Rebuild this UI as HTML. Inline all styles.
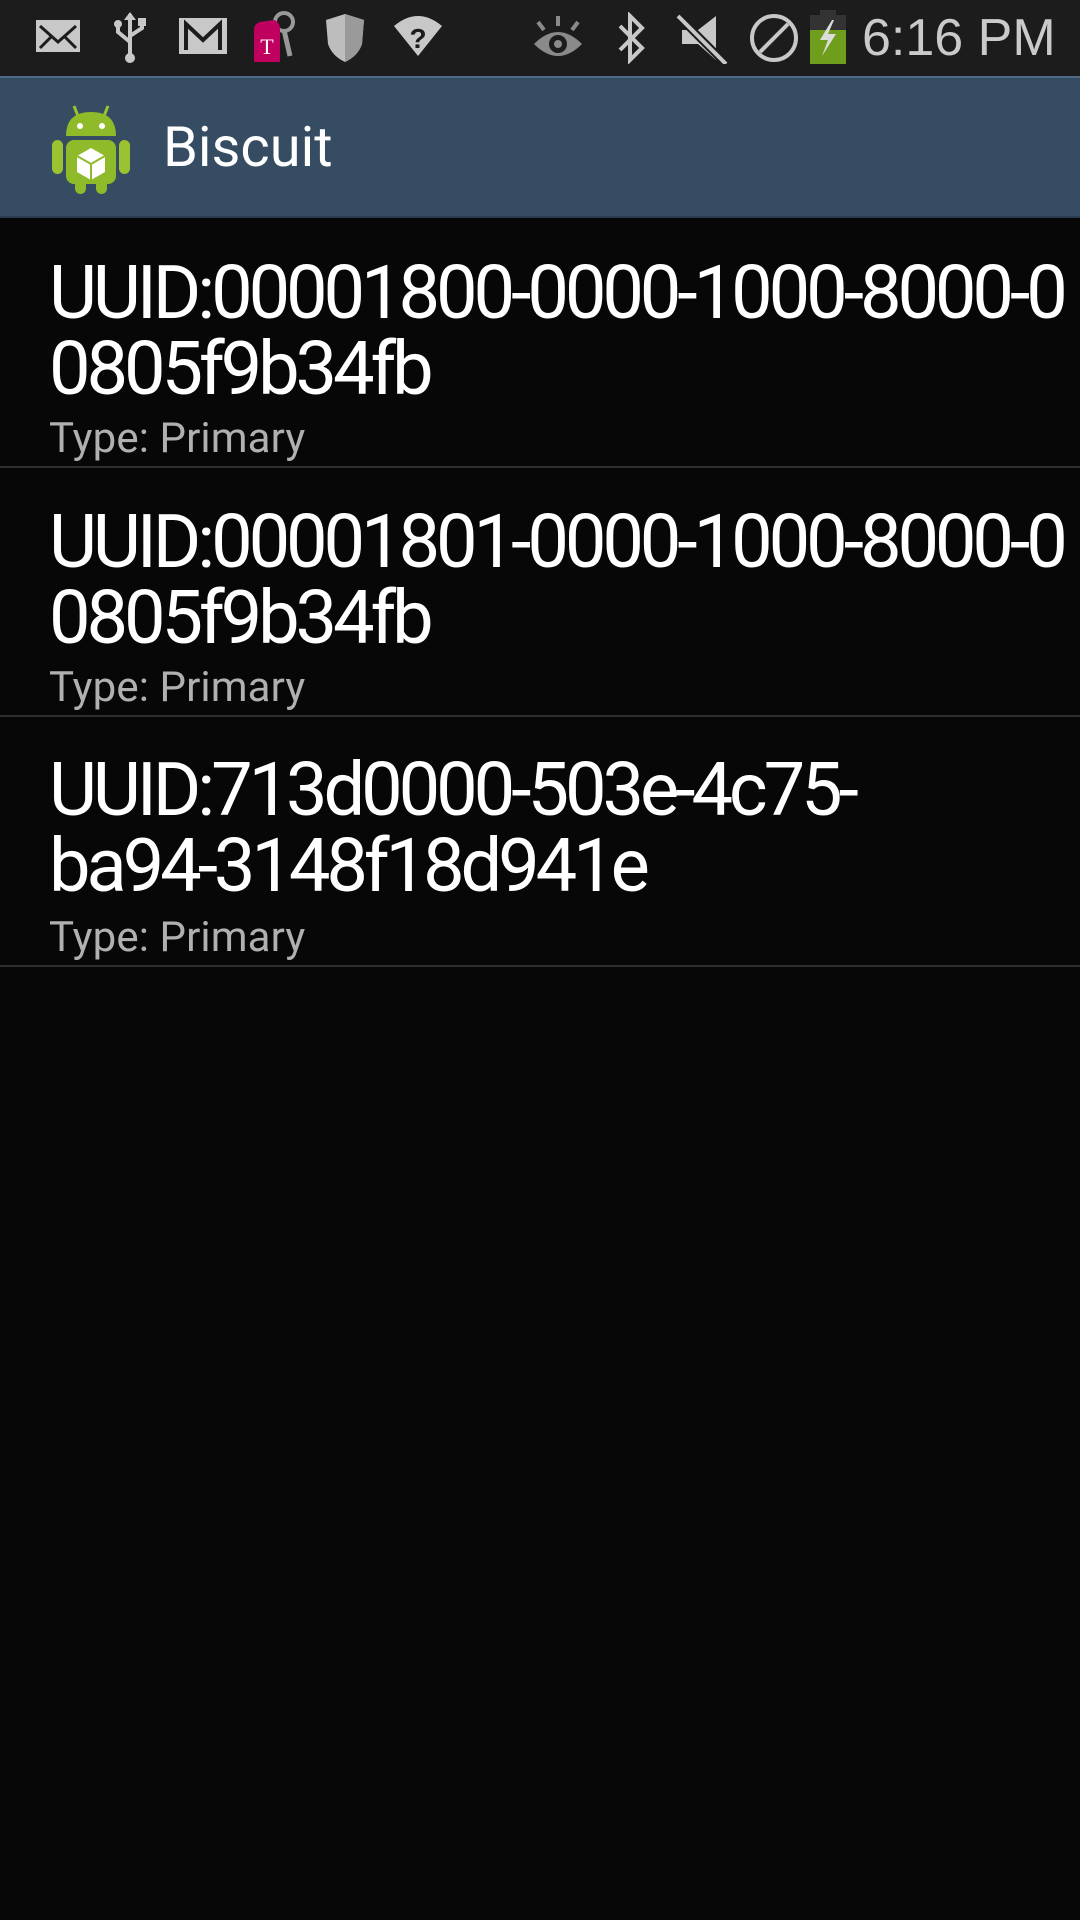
<!DOCTYPE html>
<html><head><meta charset="utf-8"><style>
html,body{margin:0;padding:0;}
body{width:1080px;height:1920px;background:#070707;position:relative;overflow:hidden;font-family:"Roboto","Liberation Sans",sans-serif;}
#sb{position:absolute;left:0;top:0;width:1080px;height:76px;background:#1c1c1c;}
#ab{position:absolute;left:0;top:76px;width:1080px;height:142px;background:#354c63;border-top:2px solid #4e6a86;box-sizing:border-box;border-bottom:2px solid #2a3d50;}
.t{position:absolute;left:49px;color:#fff;font-size:74px;letter-spacing:-4.1px;line-height:76px;white-space:nowrap;}
.s{position:absolute;left:49px;color:#b0b0b0;font-size:42px;letter-spacing:0.1px;white-space:nowrap;line-height:50px;}
.d{position:absolute;left:0;width:1080px;height:2px;background:#2f2f2f;}
svg{position:absolute;}
</style></head><body>
<div id="sb">
<svg style="left:34px;top:16px" width="48" height="40" viewBox="0 0 48 40"><rect x="2" y="4" width="44" height="32" fill="#c8c8c8"/><path d="M6 10 L24 26 L42 10 M6 32 L18 20 M42 32 L30 20" stroke="#1c1c1c" stroke-width="3" fill="none"/></svg>
<svg style="left:112px;top:12px" width="36" height="52" viewBox="0 0 36 52"><path d="M18 2 L18 46 M18 30 L6 20 L6 14 M18 24 L30 16 L30 10" stroke="#c8c8c8" stroke-width="4" fill="none"/><circle cx="18" cy="46" r="5" fill="#c8c8c8"/><circle cx="6" cy="12" r="4" fill="#c8c8c8"/><rect x="26" y="6" width="8" height="8" fill="#c8c8c8"/><path d="M12 8 L18 0 L24 8Z" fill="#c8c8c8"/></svg>
<svg style="left:178px;top:16px" width="50" height="40" viewBox="0 0 50 40"><rect x="1" y="2" width="48" height="36" fill="#c8c8c8"/><path d="M8 34 L8 8 L25 24 L42 8 L42 34" stroke="#1c1c1c" stroke-width="4" fill="none"/></svg>
<svg style="left:250px;top:10px" width="50" height="56" viewBox="0 0 50 56"><circle cx="34" cy="12" r="9" fill="none" stroke="#999" stroke-width="4"/><path d="M34 20 L40 46" stroke="#999" stroke-width="5"/><path d="M4 20 Q4 14 10 12 L24 10 Q30 12 30 20 L30 52 L4 52Z" fill="#c0005e"/><text x="17" y="44" font-size="22" fill="#fff" text-anchor="middle" font-family="Liberation Serif">T</text></svg>
<svg style="left:324px;top:12px" width="42" height="52" viewBox="0 0 42 52"><path d="M21 2 L40 8 L38 32 Q34 44 21 50 Q8 44 4 32 L2 8Z" fill="#bdbdbd"/><path d="M21 2 L40 8 L38 32 Q34 44 21 50Z" fill="#9a9a9a"/></svg>
<svg style="left:392px;top:12px" width="52" height="48" viewBox="0 0 52 48"><path d="M2 14 Q26 -6 50 14 L26 44Z" fill="#c8c8c8"/><text x="26" y="36" font-size="28" font-weight="bold" fill="#1c1c1c" text-anchor="middle" font-family="Liberation Sans">?</text></svg>
<svg style="left:530px;top:14px" width="56" height="48" viewBox="0 0 56 48"><path d="M4 30 Q28 6 52 30 Q28 54 4 30Z" fill="#8a8a8a"/><circle cx="28" cy="30" r="9" fill="#1c1c1c"/><circle cx="28" cy="30" r="4" fill="#8a8a8a"/><path d="M28 2 L28 12 M8 8 L14 16 M48 8 L42 16" stroke="#8a8a8a" stroke-width="4"/></svg>
<svg style="left:614px;top:12px" width="34" height="52" viewBox="0 0 34 52"><path d="M6 14 L28 36 L16 48 L16 4 L28 16 L6 38" stroke="#c8c8c8" stroke-width="4" fill="none"/></svg>
<svg style="left:676px;top:12px" width="54" height="52" viewBox="0 0 54 52"><path d="M40 4 L40 48 L22 32 L6 32 L6 18 L22 18Z" fill="#c8c8c8"/><path d="M2 4 L50 52" stroke="#1c1c1c" stroke-width="8"/><path d="M2 4 L50 52" stroke="#c8c8c8" stroke-width="4"/></svg>
<svg style="left:748px;top:12px" width="52" height="52" viewBox="0 0 52 52"><circle cx="26" cy="26" r="22" fill="none" stroke="#c8c8c8" stroke-width="4"/><path d="M12 40 L40 12" stroke="#c8c8c8" stroke-width="4"/></svg>
<svg style="left:810px;top:10px" width="36" height="54" viewBox="0 0 36 54"><rect x="10" y="0" width="16" height="5" fill="#333"/><rect x="0" y="5" width="36" height="15" fill="#333"/><rect x="0" y="20" width="36" height="34" fill="#6f9e1c"/><path d="M22 10 L10 30 L18 30 L12 46 L26 24 L18 24 L24 10Z" fill="#dcdcdc"/></svg>
<div style="position:absolute;left:862px;top:5px;color:#cacaca;font-size:52px;letter-spacing:0;font-family:'Liberation Sans',sans-serif;line-height:66px;">6:16 PM</div>
</div>
<div id="ab">
<svg style="left:48px;top:20px" width="86" height="98" viewBox="0 0 86 98"><path d="M26 8 L30 18 M60 8 L56 18" stroke="#9bc230" stroke-width="3"/><path d="M18 38 Q18 14 43 14 Q68 14 68 38Z" fill="#8fba2a"/><circle cx="32" cy="28" r="3" fill="#fff"/><circle cx="54" cy="28" r="3" fill="#fff"/><rect x="18" y="42" width="50" height="44" rx="8" fill="#8fba2a"/><rect x="4" y="42" width="11" height="34" rx="5.5" fill="#9bc230"/><rect x="71" y="42" width="11" height="34" rx="5.5" fill="#9bc230"/><rect x="27" y="76" width="11" height="20" rx="5.5" fill="#8fba2a"/><rect x="48" y="76" width="11" height="20" rx="5.5" fill="#8fba2a"/><path d="M43 50 L57 58 L57 74 L43 82 L29 74 L29 58Z" fill="#fff"/><path d="M29 58 L43 66 L57 58 M43 66 L43 82" stroke="#8fba2a" stroke-width="2" fill="none"/></svg>
<div style="position:absolute;left:163px;top:36px;color:#fff;font-size:56px;line-height:66px;">Biscuit</div>
</div>

<div class="t" style="top:256px">UUID:00001800-0000-1000-8000-0<br>0805f9b34fb</div>
<div class="s" style="top:414px">Type: Primary</div>
<div class="d" style="top:466px"></div>

<div class="t" style="top:505px">UUID:00001801-0000-1000-8000-0<br>0805f9b34fb</div>
<div class="s" style="top:663px">Type: Primary</div>
<div class="d" style="top:715px"></div>

<div class="t" style="top:753px">UUID:713d0000-503e-4c75-<br>ba94-3148f18d941e</div>
<div class="s" style="top:913px">Type: Primary</div>
<div class="d" style="top:965px"></div>
</body></html>
